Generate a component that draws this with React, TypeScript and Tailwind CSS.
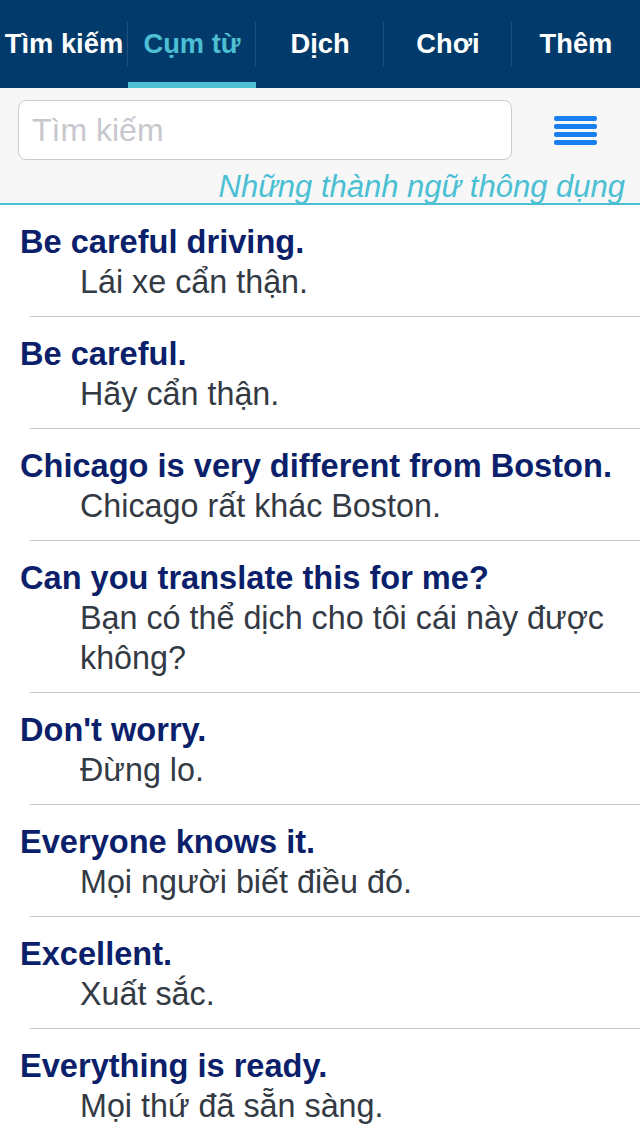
const TABS = ["Tìm kiếm", "Cụm từ", "Dịch", "Chơi", "Thêm"];

const PHRASES = [
  { en: "Be careful driving.", vi: "Lái xe cẩn thận." },
  { en: "Be careful.", vi: "Hãy cẩn thận." },
  { en: "Chicago is very different from Boston.", vi: "Chicago rất khác Boston." },
  { en: "Can you translate this for me?", vi: "Bạn có thể dịch cho tôi cái này được không?" },
  { en: "Don't worry.", vi: "Đừng lo." },
  { en: "Everyone knows it.", vi: "Mọi người biết điều đó." },
  { en: "Excellent.", vi: "Xuất sắc." },
  { en: "Everything is ready.", vi: "Mọi thứ đã sẵn sàng." },
];

export default function App() {
  return (
    <div className="h-[1136px] w-[640px] overflow-hidden bg-white font-['Liberation_Sans',Arial,sans-serif]">
      {/* tab bar */}
      <nav className="flex h-[88px] bg-[#023b6b]">
        {TABS.map((t, i) => (
          <div key={t} className="relative flex w-[128px] flex-col">
            <div className="flex flex-1 items-center justify-center pt-[6px]">
              <span
                className={
                  "whitespace-nowrap text-[27.3px] font-bold " +
                  (i === 1 ? "text-[#4dbfd2]" : "text-white")
                }
              >
                {t}
              </span>
            </div>
            <div className={"h-[6px] " + (i === 1 ? "bg-[#4dbfd2]" : "")} />
            {i < TABS.length - 1 && (
              <div className="absolute right-0 top-[22px] h-[44px] w-px bg-[#1f5180]" />
            )}
          </div>
        ))}
      </nav>

      {/* search area */}
      <div className="border-b-2 border-[#4bbfd3] bg-[#f7f7f7]">
        <div className="flex items-center pl-[18px] pt-[12px]">
          <div className="flex h-[60px] w-[494px] items-center rounded-[8px] border border-[#cccccc] bg-white px-[13px]">
            <span className="text-[32px] text-[#c7c7cd]">Tìm kiếm</span>
          </div>
          <div className="ml-[42px] flex w-[43px] flex-col gap-[3px]">
            <div className="h-[5px] rounded-[2px] bg-[#1a7ff0]" />
            <div className="h-[5px] rounded-[2px] bg-[#1a7ff0]" />
            <div className="h-[5px] rounded-[2px] bg-[#1a7ff0]" />
            <div className="h-[5px] rounded-[2px] bg-[#1a7ff0]" />
          </div>
        </div>
        <div className="flex h-[43px] items-center justify-end pr-[15px] pt-[12px]">
          <span className="whitespace-nowrap text-[31px] italic text-[#4bbfd3]">
            Những thành ngữ thông dụng
          </span>
        </div>
      </div>

      {/* phrase list */}
      <ul>
        {PHRASES.map((p) => (
          <li key={p.en} className="ml-[30px] border-b border-[#c8c8c8] pb-[14px] pt-[17px]">
            <div className="-ml-[10px] text-[32.6px] font-bold leading-[40px] text-[#0b1f6b]">
              {p.en}
            </div>
            <div className="ml-[50px] pr-[10px] text-[32.3px] leading-[40px] text-[#333a44]">
              {p.vi}
            </div>
          </li>
        ))}
      </ul>
    </div>
  );
}
